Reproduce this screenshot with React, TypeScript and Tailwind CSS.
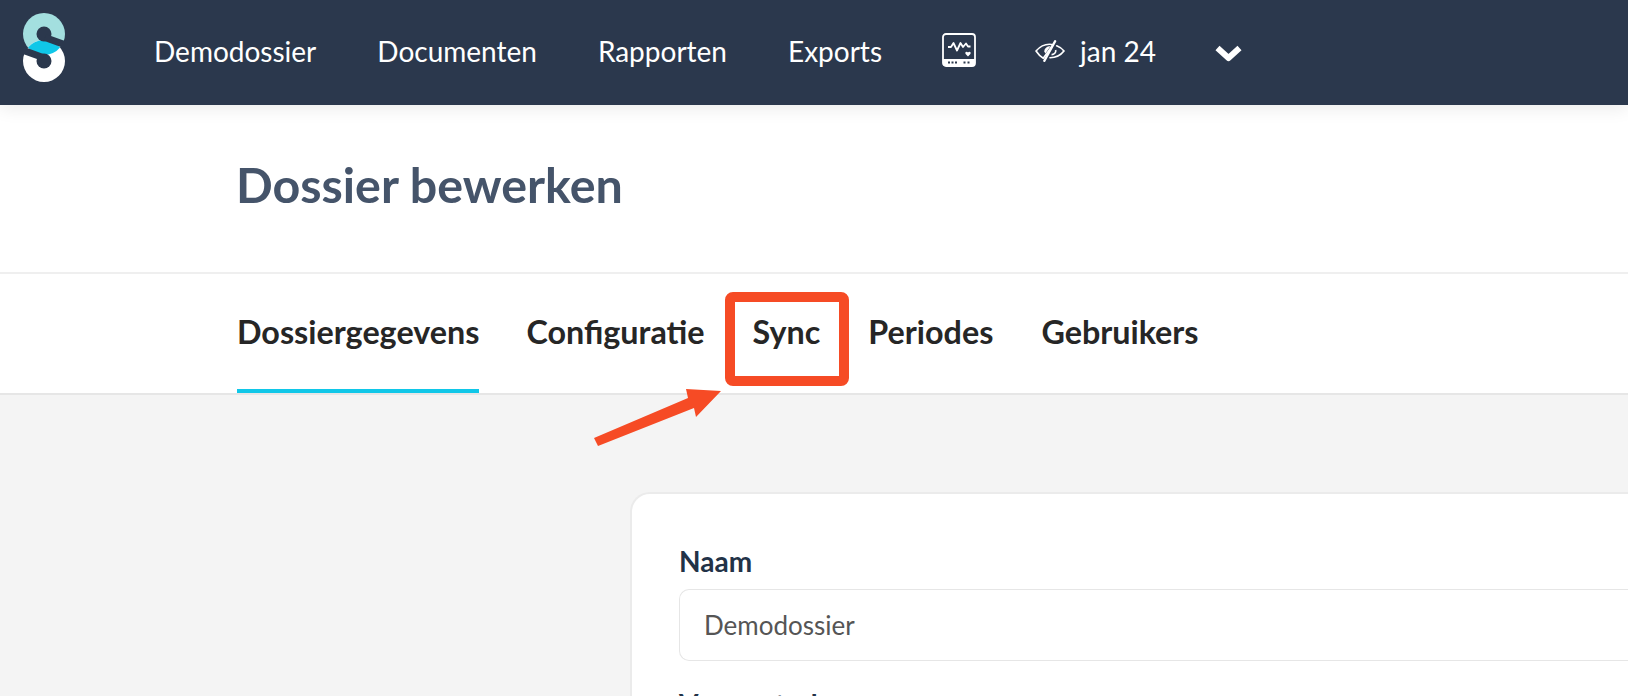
const font = "font-['Lato','Liberation_Sans',sans-serif]";

function Logo() {
  return (
    <svg width="42" height="69" viewBox="0 0 42 69" className="shrink-0">
      <circle cx="21" cy="21" r="21" fill="#a3dfdf" />
      <circle cx="21" cy="48" r="21" fill="#ffffff" />
      <path d="M4.900 34.500A21 21 0 0 1 37.100 34.500A21 21 0 0 1 4.900 34.500Z" fill="#10c7e8" />
      <circle cx="21" cy="21" r="7.500" fill="#2b384d" />
      <circle cx="21" cy="48" r="7.500" fill="#2b384d" />
      <path d="M22 24.500 44 32.500M20 44.500 -2 36.500" stroke="#2b384d" strokeWidth="7" />
    </svg>
  );
}

function MonitorIcon() {
  return (
    <svg width="34" height="34" viewBox="0 0 34 34" fill="none">
      <rect x="1" y="1" width="32" height="32" rx="3" stroke="#fff" strokeWidth="1.800" />
      <path d="M1 26h32v4a3 3 0 0 1-3 3H4a3 3 0 0 1-3-3z" fill="#fff" />
      <path d="M6 14h3l2.500-4 3.500 7.500 3.500-7.500 2.500 4 3-3.500 2 3h2.500" stroke="#fff" strokeWidth="1.800" strokeLinejoin="round" />
      <path d="M26 19.500c1-1.600 3.500-.6 2.400 1.400L26 23.500l-2.400-2.600c-1.100-2 1.400-3 2.400-1.400z" fill="#fff" />
      <path d="M6 29.500h2M9.500 29.500h2M13 29.500h2M21.500 29.500h2M25.500 29.500h2" stroke="#2b384d" strokeWidth="1.800" />
    </svg>
  );
}

function EyeOffIcon() {
  return (
    <svg width="30" height="22" viewBox="0 0 29 21" fill="none">
      <path d="M1 10.500C4.500 6.500 8.500 4 14 4c1.200 0 2.500.1 3.500.4L8 17.500C5.300 16 3 13.500 1 10.500z" stroke="#fff" strokeWidth="1.600" strokeLinejoin="round" />
      <path d="M9 11c0-3 2.500-5 6-5l-5 7z" fill="#fff" />
      <path d="M19.500 1 9 20" stroke="#fff" strokeWidth="2.200" strokeLinecap="round" />
      <path d="M21 5.500c3 1.200 5.500 3 7 5-3.500 4.500-8 6.500-13.500 6.500" stroke="#fff" strokeWidth="1.600" strokeLinecap="round" />
      <path d="M20 9.500c.5 2.500-1.500 4.500-4 4.500" stroke="#fff" strokeWidth="1.600" />
    </svg>
  );
}

function Chevron() {
  return (
    <svg width="27" height="18" viewBox="0 0 27 18" fill="none">
      <path d="M2.500 4 13.500 14 24.500 4" stroke="#fff" strokeWidth="6" strokeLinejoin="round" />
    </svg>
  );
}

const navItems = ["Demodossier", "Documenten", "Rapporten", "Exports"];
const tabs = ["Dossiergegevens", "Configuratie", "Sync", "Periodes", "Gebruikers"];

export default function App() {
  return (
    <div className={`${font} relative h-[696px] w-[1628px] overflow-hidden bg-[#f4f4f4]`}>
      <header className="relative z-10 flex h-[105px] items-center bg-[#2b384d] pl-[23px] text-white shadow-[0_4px_16px_rgba(0,0,0,0.08)]">
        <div className="mt-[-12px] mb-[-1px]">
          <Logo />
        </div>
        <nav className="ml-[89px] mb-[4px] flex items-center gap-[61px] text-[28px]">
          {navItems.map((item) => (
            <span key={item}>{item}</span>
          ))}
        </nav>
        <div className="ml-[60px] mb-[5px]">
          <MonitorIcon />
        </div>
        <div className="ml-[59px] mb-[4px] flex items-center gap-[15px] text-[28px]">
          <EyeOffIcon />
          <span>jan 24</span>
        </div>
        <div className="ml-[59px]">
          <Chevron />
        </div>
      </header>

      <div className="flex h-[169px] items-center border-b-2 border-[#efefef] bg-white pb-[9px] pl-[236px]">
        <h1 className="text-[48.400px] font-bold text-[#45546a]">Dossier bewerken</h1>
      </div>

      <div className="flex h-[121px] gap-[46px] border-b-2 border-[#e6e6e6] bg-white pl-[237px] text-[32.300px] font-bold text-[#262626]">
        {tabs.map((tab, i) => (
          <div
            key={tab}
            className={`flex items-center pt-[2px] ${i === 0 ? "border-b-4 border-[#10c7e8] pr-[0px]" : "px-[1px] pb-[4px]"}`}
          >
            {tab}
          </div>
        ))}
      </div>

      <div className="ml-[630px] mt-[97px] rounded-tl-[20px] border-l-2 border-t-2 border-[#ebebeb] bg-white pl-[47px] pt-[50px]">
        <div className="text-[28px] font-bold leading-[34px] text-[#223247]">Naam</div>
        <div className="mt-[11px] flex h-[72px] items-center rounded-l-[10px] border border-r-0 border-[#e6e6e6] pl-[24px] text-[26px] text-[#555555]">
          Demodossier
        </div>
        <div className="mt-[26px] text-[28px] font-bold leading-[34px] text-[#223247]">Vennootschap</div>
      </div>

      <div className="absolute left-[725px] top-[292px] h-[94px] w-[124px] rounded-[8px] border-[10px] border-[#f64b25]" />
      <svg className="absolute left-[589px] top-[385px]" width="135" height="62" viewBox="0 0 135 62">
        <path d="M5 53 99 13 97 4 132 6 107 32 105 23 9 61Z" fill="#f64b25" />
      </svg>
    </div>
  );
}
